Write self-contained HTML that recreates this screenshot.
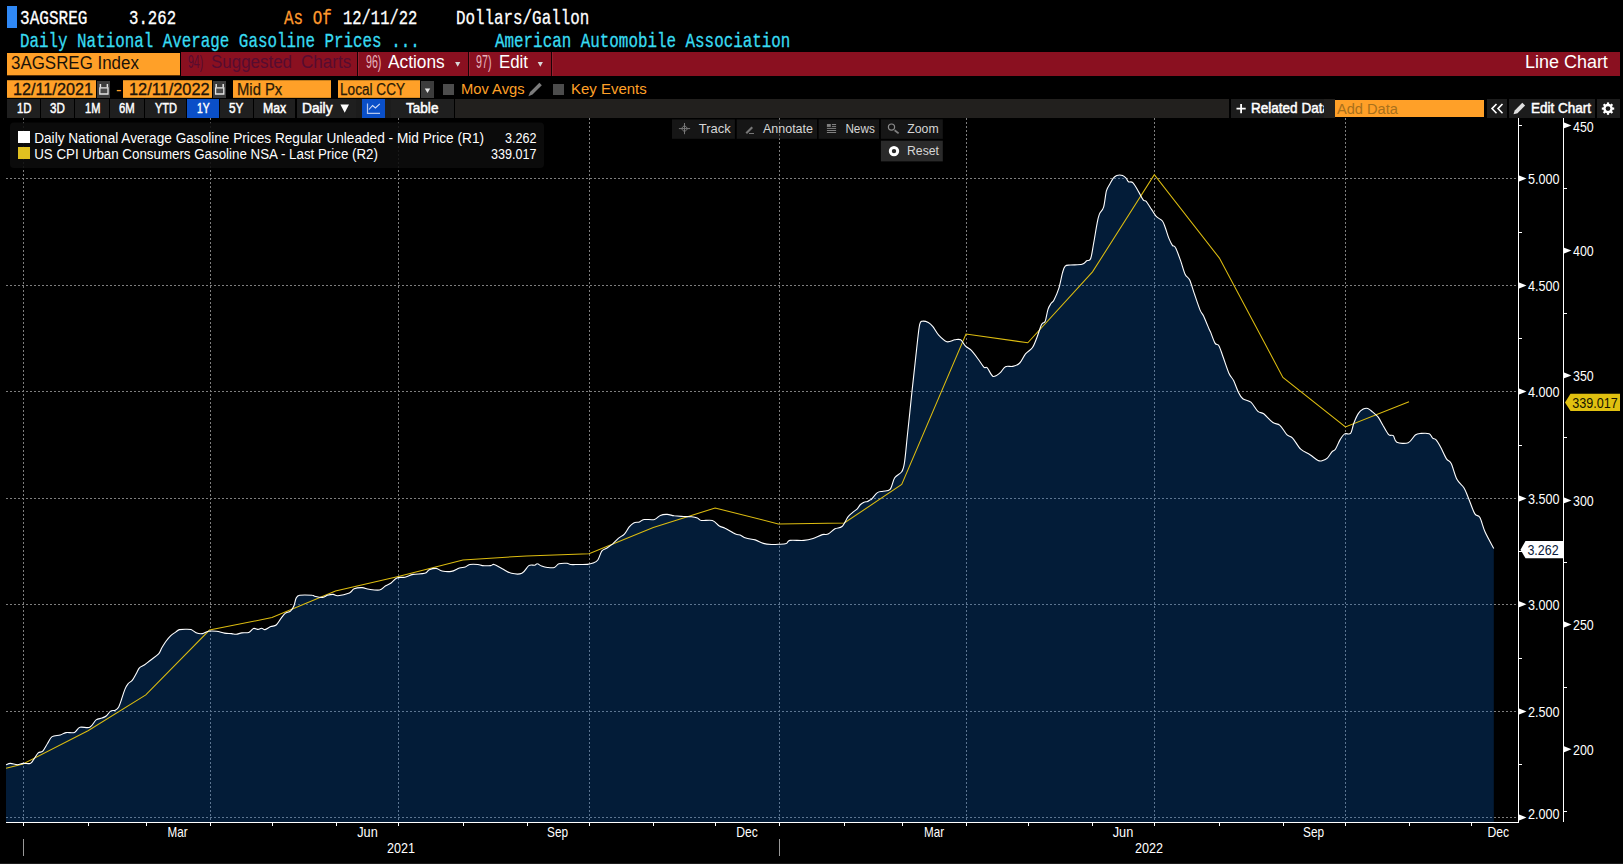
<!DOCTYPE html>
<html lang="en"><head><meta charset="utf-8"><title>3AGSREG Index - Line Chart</title>
<style>
html,body{margin:0;padding:0;background:#000;}
body{width:1623px;height:864px;position:relative;overflow:hidden;font-family:"Liberation Sans",sans-serif;}
.t{position:absolute;white-space:pre;transform-origin:0 0;display:block;}
.b{position:absolute;box-sizing:border-box;}
svg{position:absolute;left:0;top:0;}
</style></head><body>

<div id="hdr">
<div class="b" style="left:7px;top:6px;width:10.00px;height:22.00px;background:#2f88f5;"></div>
<span class="t" style="left:20.30px;top:8.85px;font-size:20.3px;line-height:20.3px;font-family:'Liberation Mono',monospace;color:#fff;transform:scaleX(0.7912);-webkit-text-stroke:0.3px #fff;">3AGSREG</span>
<span class="t" style="left:129.40px;top:8.85px;font-size:20.3px;line-height:20.3px;font-family:'Liberation Mono',monospace;color:#fff;transform:scaleX(0.7729);-webkit-text-stroke:0.3px #fff;">3.262</span>
<span class="t" style="left:283.60px;top:8.85px;font-size:20.3px;line-height:20.3px;font-family:'Liberation Mono',monospace;color:#ff9a2e;transform:scaleX(0.7844);-webkit-text-stroke:0.3px #ff9a2e;">As Of</span>
<span class="t" style="left:343.30px;top:8.85px;font-size:20.3px;line-height:20.3px;font-family:'Liberation Mono',monospace;color:#fff;transform:scaleX(0.7631);-webkit-text-stroke:0.3px #fff;">12/11/22</span>
<span class="t" style="left:456.00px;top:8.85px;font-size:20.3px;line-height:20.3px;font-family:'Liberation Mono',monospace;color:#fff;transform:scaleX(0.7818);-webkit-text-stroke:0.3px #fff;">Dollars/Gallon</span>
<span class="t" style="left:20.30px;top:31.85px;font-size:20.3px;line-height:20.3px;font-family:'Liberation Mono',monospace;color:#38dcf2;transform:scaleX(0.7819);-webkit-text-stroke:0.3px #38dcf2;">Daily National Average Gasoline Prices ...</span>
<span class="t" style="left:495.20px;top:31.85px;font-size:20.3px;line-height:20.3px;font-family:'Liberation Mono',monospace;color:#38dcf2;transform:scaleX(0.7828);-webkit-text-stroke:0.3px #38dcf2;">American Automobile Association</span>
</div>
<div id="bar">
<div class="b" style="left:181px;top:52px;width:1439.00px;height:23.70px;background:#8a1020;"></div>
<div class="b" style="left:7px;top:53px;width:173.30px;height:22.60px;background:#ffa028;border-bottom:1.1px solid #5a3206;"></div>
<span class="t" style="left:10.80px;top:53.70px;font-size:18.9px;line-height:18.9px;font-family:'Liberation Sans',sans-serif;color:#1a1208;transform:scaleX(0.8957);">3AGSREG Index</span>
<span class="t" style="left:188.30px;top:53.36px;font-size:18px;line-height:18px;font-family:'Liberation Sans',sans-serif;color:#560c30;transform:scaleX(0.5846);">94)</span>
<span class="t" style="left:211.00px;top:53.36px;font-size:18px;line-height:18px;font-family:'Liberation Sans',sans-serif;color:#560c30;transform:scaleX(0.9412);">Suggested</span>
<span class="t" style="left:300.70px;top:53.36px;font-size:18px;line-height:18px;font-family:'Liberation Sans',sans-serif;color:#560c30;transform:scaleX(0.9491);">Charts</span>
<div class="b" style="left:357px;top:52px;width:1.00px;height:23.50px;background:#1a0206;"></div>
<div class="b" style="left:358px;top:52px;width:1.00px;height:23.50px;background:#98202e;"></div>
<div class="b" style="left:468px;top:52px;width:1.00px;height:23.50px;background:#1a0206;"></div>
<div class="b" style="left:469px;top:52px;width:1.00px;height:23.50px;background:#98202e;"></div>
<div class="b" style="left:551px;top:52px;width:1.00px;height:23.50px;background:#1a0206;"></div>
<div class="b" style="left:552px;top:52px;width:1.00px;height:23.50px;background:#98202e;"></div>
<span class="t" style="left:365.90px;top:53.19px;font-size:18.2px;line-height:18.2px;font-family:'Liberation Sans',sans-serif;color:#e6b4be;transform:scaleX(0.5853);">96)</span>
<span class="t" style="left:388.30px;top:53.19px;font-size:18.2px;line-height:18.2px;font-family:'Liberation Sans',sans-serif;color:#fff;transform:scaleX(0.9509);">Actions</span>
<span class="t" style="left:476.10px;top:53.19px;font-size:18.2px;line-height:18.2px;font-family:'Liberation Sans',sans-serif;color:#e6b4be;transform:scaleX(0.5891);">97)</span>
<span class="t" style="left:498.90px;top:53.19px;font-size:18.2px;line-height:18.2px;font-family:'Liberation Sans',sans-serif;color:#fff;transform:scaleX(0.9261);">Edit</span>
<span class="t" style="left:1524.60px;top:52.68px;font-size:18.8px;line-height:18.8px;font-family:'Liberation Sans',sans-serif;color:#fff;transform:scaleX(0.9561);">Line Chart</span>
<svg width="1623" height="864" viewBox="0 0 1623 864" style="pointer-events:none"><path d="M455.1 61.9h5.2l-2.6 4.8zM537.7 61.9h5.2l-2.6 4.8z" fill="#d8d8d8"/></svg>
</div>
<div id="row4">
<div class="b" style="left:7px;top:80.2px;width:89.00px;height:17.90px;background:#ffa028;border-top:1px solid #c8801e;border-bottom:1px solid #d88a20;"></div>
<div class="b" style="left:123px;top:80.2px;width:88.60px;height:17.90px;background:#ffa028;border-top:1px solid #c8801e;border-bottom:1px solid #d88a20;"></div>
<div class="b" style="left:232.7px;top:80.2px;width:98.50px;height:17.90px;background:#ffa028;border-top:1px solid #c8801e;border-bottom:1px solid #d88a20;"></div>
<div class="b" style="left:337.7px;top:80.2px;width:82.60px;height:17.90px;background:#ffa028;border-top:1px solid #c8801e;border-bottom:1px solid #d88a20;"></div>
<span class="t" style="left:12.60px;top:81.52px;font-size:15.8px;line-height:15.8px;font-family:'Liberation Sans',sans-serif;color:#20140a;transform:scaleX(1.0265);-webkit-text-stroke:0.3px #20140a;">12/11/2021</span>
<span class="t" style="left:128.50px;top:81.52px;font-size:15.8px;line-height:15.8px;font-family:'Liberation Sans',sans-serif;color:#20140a;transform:scaleX(1.0354);-webkit-text-stroke:0.3px #20140a;">12/11/2022</span>
<span class="t" style="left:236.50px;top:81.52px;font-size:15.8px;line-height:15.8px;font-family:'Liberation Sans',sans-serif;color:#2a1a06;transform:scaleX(0.9376);-webkit-text-stroke:0.25px #2a1a06;">Mid Px</span>
<span class="t" style="left:340.40px;top:81.52px;font-size:15.8px;line-height:15.8px;font-family:'Liberation Sans',sans-serif;color:#2a1a06;transform:scaleX(0.8615);-webkit-text-stroke:0.25px #2a1a06;">Local CCY</span>
<span class="t" style="left:115.50px;top:81.52px;font-size:15.8px;line-height:15.8px;font-family:'Liberation Sans',sans-serif;color:#ffa028;transform:scaleX(1.0476);">-</span>
<div class="b" style="left:97.2px;top:80.8px;width:13.00px;height:17.30px;background:#3c3c3c;"></div>
<div class="b" style="left:213px;top:80.8px;width:12.90px;height:17.30px;background:#3c3c3c;"></div>
<div class="b" style="left:421.4px;top:81px;width:12.30px;height:16.80px;background:#3c3c3c;"></div>
<div class="b" style="left:443.1px;top:84.4px;width:10.90px;height:10.50px;background:#4c4c4c;"></div>
<div class="b" style="left:553.1px;top:84.4px;width:10.90px;height:10.50px;background:#4c4c4c;"></div>
<span class="t" style="left:461.40px;top:81.87px;font-size:14.8px;line-height:14.8px;font-family:'Liberation Sans',sans-serif;color:#ffa028;transform:scaleX(0.9947);">Mov Avgs</span>
<span class="t" style="left:571.40px;top:81.87px;font-size:14.8px;line-height:14.8px;font-family:'Liberation Sans',sans-serif;color:#ffa028;transform:scaleX(1.0115);">Key Events</span>
</div>
<div id="row5">
<div class="b" style="left:455.4px;top:99.4px;width:774.10px;height:18.30px;background:#22201e;"></div>
<div class="b" style="left:7px;top:99.4px;width:32.70px;height:18.30px;background:#1f1f1f;"></div>
<div class="b" style="left:40.7px;top:99.4px;width:33.30px;height:18.30px;background:#1f1f1f;"></div>
<div class="b" style="left:75px;top:99.4px;width:34.40px;height:18.30px;background:#1f1f1f;"></div>
<div class="b" style="left:110.3px;top:99.4px;width:33.70px;height:18.30px;background:#1f1f1f;"></div>
<div class="b" style="left:145px;top:99.4px;width:41.00px;height:18.30px;background:#1f1f1f;"></div>
<div class="b" style="left:187px;top:99.4px;width:32.00px;height:18.30px;background:#0a4fc8;"></div>
<div class="b" style="left:220px;top:99.4px;width:33.00px;height:18.30px;background:#1f1f1f;"></div>
<div class="b" style="left:254px;top:99.4px;width:40.60px;height:18.30px;background:#1f1f1f;"></div>
<div class="b" style="left:296.8px;top:99.4px;width:58.80px;height:18.30px;background:#1f1f1f;"></div>
<div class="b" style="left:355.6px;top:99.4px;width:6.40px;height:18.30px;background:#1c1c1c;"></div>
<div class="b" style="left:362px;top:99.4px;width:23.00px;height:18.30px;background:#0a4fc8;"></div>
<div class="b" style="left:385px;top:99.4px;width:5.70px;height:18.30px;background:#1c1c1c;"></div>
<div class="b" style="left:390.7px;top:99.4px;width:63.80px;height:18.30px;background:#1f1f1f;"></div>
<div class="b" style="left:1230.75px;top:99.4px;width:93.25px;height:18.30px;background:#1c1c1c;"></div>
<div class="b" style="left:1324px;top:99.4px;width:10.80px;height:18.30px;background:#22201e;"></div>
<div class="b" style="left:1334.8px;top:99.8px;width:149.20px;height:17.20px;background:#ffa028;"></div>
<div class="b" style="left:1486.5px;top:99.4px;width:20.50px;height:18.30px;background:#1c1c1c;"></div>
<div class="b" style="left:1509px;top:99.4px;width:86.00px;height:18.30px;background:#1c1c1c;"></div>
<div class="b" style="left:1597px;top:99.4px;width:22.50px;height:18.30px;background:#1c1c1c;"></div>
</div>
<div id="row5t">
<span class="t" style="left:16.60px;top:101.01px;font-size:14.4px;line-height:14.4px;font-family:'Liberation Sans',sans-serif;color:#fff;transform:scaleX(0.7891);-webkit-text-stroke:0.5px #fff;">1D</span>
<span class="t" style="left:50.30px;top:101.01px;font-size:14.4px;line-height:14.4px;font-family:'Liberation Sans',sans-serif;color:#fff;transform:scaleX(0.8054);-webkit-text-stroke:0.5px #fff;">3D</span>
<span class="t" style="left:85.00px;top:101.01px;font-size:14.4px;line-height:14.4px;font-family:'Liberation Sans',sans-serif;color:#fff;transform:scaleX(0.7700);-webkit-text-stroke:0.5px #fff;">1M</span>
<span class="t" style="left:119.20px;top:101.01px;font-size:14.4px;line-height:14.4px;font-family:'Liberation Sans',sans-serif;color:#fff;transform:scaleX(0.7850);-webkit-text-stroke:0.5px #fff;">6M</span>
<span class="t" style="left:154.90px;top:101.01px;font-size:14.4px;line-height:14.4px;font-family:'Liberation Sans',sans-serif;color:#fff;transform:scaleX(0.7652);-webkit-text-stroke:0.5px #fff;">YTD</span>
<span class="t" style="left:197.20px;top:101.01px;font-size:14.4px;line-height:14.4px;font-family:'Liberation Sans',sans-serif;color:#fff;transform:scaleX(0.7174);-webkit-text-stroke:0.5px #fff;">1Y</span>
<span class="t" style="left:229.20px;top:101.01px;font-size:14.4px;line-height:14.4px;font-family:'Liberation Sans',sans-serif;color:#fff;transform:scaleX(0.8199);-webkit-text-stroke:0.5px #fff;">5Y</span>
<span class="t" style="left:262.80px;top:101.01px;font-size:14.4px;line-height:14.4px;font-family:'Liberation Sans',sans-serif;color:#fff;transform:scaleX(0.8533);-webkit-text-stroke:0.5px #fff;">Max</span>
<span class="t" style="left:302.00px;top:101.01px;font-size:14.4px;line-height:14.4px;font-family:'Liberation Sans',sans-serif;color:#fff;transform:scaleX(0.9550);-webkit-text-stroke:0.5px #fff;">Daily</span>
<span class="t" style="left:406.40px;top:101.01px;font-size:14.4px;line-height:14.4px;font-family:'Liberation Sans',sans-serif;color:#fff;transform:scaleX(0.9425);-webkit-text-stroke:0.5px #fff;">Table</span>
<div class="b" style="left:1230.8px;top:99.4px;width:93.4px;height:18.299999999999997px;overflow:hidden">
<span class="t" style="left:20.60px;top:1.81px;font-size:14.4px;line-height:14.4px;font-family:'Liberation Sans',sans-serif;color:#fff;transform:scaleX(0.9402);-webkit-text-stroke:0.5px #fff;">Related Data</span>
</div>
<span class="t" style="left:1336.50px;top:100.95px;font-size:15.3px;line-height:15.3px;font-family:'Liberation Sans',sans-serif;color:#a8701c;transform:scaleX(0.9550);">Add Data</span>
<span class="t" style="left:1530.75px;top:101.21px;font-size:14.4px;line-height:14.4px;font-family:'Liberation Sans',sans-serif;color:#fff;transform:scaleX(0.9384);-webkit-text-stroke:0.5px #fff;">Edit Chart</span>
</div>
<svg width="1623" height="864" viewBox="0 0 1623 864">
<g id="icons">
<path d="M340.4 104.5h8.6l-4.3 8.2z" fill="#fff"/>
<path d="M424.8 88.6h5.4l-2.7 4.4z" fill="#e8e8e8"/>
<g transform="translate(97.2,80.2)" fill="none" stroke="#e4e4e4"><path d="M2.6 7.6h8.2v6.2h-8.2z" stroke-width="1.3" fill="#4a4a4a"/><path d="M3.2 3.9v3.4M10.2 3.9v3.4" stroke-width="1.5"/></g>
<g transform="translate(213,80.2)" fill="none" stroke="#e4e4e4"><path d="M2.6 7.6h8.2v6.2h-8.2z" stroke-width="1.3" fill="#4a4a4a"/><path d="M3.2 3.9v3.4M10.2 3.9v3.4" stroke-width="1.5"/></g>
<path d="M528.4 96.2L530.1 92.1 539.4 82.8 541.8 85.2 532.5 94.5Z" fill="#7c7c7c"/>
<path d="M367.5 103.5v9.8h12.5" fill="none" stroke="#b4c6ee" stroke-width="1.2"/><path d="M369 109.5l3.6-4 2.8 2.4 4.4-4" fill="none" stroke="#d6e0f8" stroke-width="1.1"/>
<path d="M1236.5 108.6h9.2M1241.1 104v9.2" stroke="#fff" stroke-width="1.8"/>
<path d="M1496.5 104l-4.5 4.6 4.5 4.6M1502.5 104l-4.5 4.6 4.5 4.6" fill="none" stroke="#fff" stroke-width="1.6"/>
<path d="M1513.5 114.2l1.2-3.8 7.6-7.6 2.8 2.8-7.6 7.6z" fill="#e0e0e0"/>
<g transform="translate(1608,108.6)"><circle r="3.6" fill="none" stroke="#fff" stroke-width="2.4"/><rect x="-1.1" y="-6.2" width="2.2" height="3" fill="#fff" transform="rotate(0)"/><rect x="-1.1" y="-6.2" width="2.2" height="3" fill="#fff" transform="rotate(45)"/><rect x="-1.1" y="-6.2" width="2.2" height="3" fill="#fff" transform="rotate(90)"/><rect x="-1.1" y="-6.2" width="2.2" height="3" fill="#fff" transform="rotate(135)"/><rect x="-1.1" y="-6.2" width="2.2" height="3" fill="#fff" transform="rotate(180)"/><rect x="-1.1" y="-6.2" width="2.2" height="3" fill="#fff" transform="rotate(225)"/><rect x="-1.1" y="-6.2" width="2.2" height="3" fill="#fff" transform="rotate(270)"/><rect x="-1.1" y="-6.2" width="2.2" height="3" fill="#fff" transform="rotate(315)"/></g>
</g>
<g stroke="#7e7e7e" stroke-width="1" stroke-dasharray="2 2" shape-rendering="crispEdges">
<path d="M6 178.5H1516"/>
<path d="M6 285.5H1516"/>
<path d="M6 391.5H1516"/>
<path d="M6 498.5H1516"/>
<path d="M6 604.5H1516"/>
<path d="M6 711.5H1516"/>
<path d="M6 817.5H1516"/>
<path d="M23.5 118V822"/>
<path d="M210.5 118V822"/>
<path d="M398.5 118V822"/>
<path d="M589.5 118V822"/>
<path d="M779.5 118V822"/>
<path d="M966.5 118V822"/>
<path d="M1154.5 118V822"/>
<path d="M1345.5 118V822"/>
</g>
<rect x="672" y="119.4" width="62.9" height="19.4" fill="#2c2c2c" fill-opacity="0.5"/>
<rect x="736.7" y="119.4" width="80.4" height="19.4" fill="#2c2c2c" fill-opacity="0.5"/>
<rect x="818.6" y="119.4" width="60.4" height="19.4" fill="#2c2c2c" fill-opacity="0.5"/>
<rect x="880.9" y="119.4" width="61.9" height="19.4" fill="#2c2c2c" fill-opacity="0.5"/>
<rect x="880.9" y="140.7" width="61.9" height="20.7" fill="#2a2a2a"/>
<path d="M6.0,822 L6.0,764.8 C6.7,764.6 8.5,763.4 10.4,763.4 C12.3,763.4 15.3,764.8 17.4,764.8 C19.5,764.8 21.0,763.6 23.1,763.4 C25.2,763.2 28.4,764.0 30.1,763.4 C31.9,762.8 32.2,761.5 33.6,759.7 C35.0,757.9 36.7,754.2 38.2,752.8 C39.7,751.4 41.2,752.8 42.8,751.2 C44.3,749.7 46.0,745.9 47.5,743.5 C49.0,741.1 50.0,738.0 52.1,736.6 C54.2,735.2 57.9,735.7 60.2,735.0 C62.5,734.3 63.6,733.0 66.0,732.6 C68.4,732.2 72.2,733.3 74.5,732.4 C76.8,731.5 77.4,728.1 79.9,727.3 C82.5,726.4 87.1,728.5 89.8,727.3 C92.5,726.1 94.1,721.4 96.1,719.9 C98.1,718.4 100.2,718.8 101.9,718.1 C103.6,717.4 105.0,716.9 106.5,715.7 C108.0,714.5 109.1,712.0 110.6,711.1 C112.1,710.2 113.9,710.9 115.3,710.2 C116.7,709.5 117.7,708.7 118.7,706.9 C119.7,705.1 120.5,702.5 121.5,699.5 C122.5,696.5 123.9,691.7 125.0,689.1 C126.1,686.5 126.8,685.3 128.0,683.8 C129.2,682.3 131.0,681.9 132.4,680.1 C133.8,678.3 135.4,675.0 136.6,672.9 C137.8,670.8 138.2,669.0 139.6,667.6 C140.9,666.2 142.9,666.0 144.7,664.8 C146.5,663.6 148.2,662.0 150.5,660.2 C152.8,658.4 156.7,656.0 158.6,653.9 C160.5,651.8 160.7,649.6 162.0,647.5 C163.3,645.4 164.7,643.0 166.2,641.0 C167.7,639.0 169.2,637.1 170.8,635.6 C172.4,634.1 174.5,632.9 175.9,631.9 C177.3,630.9 177.9,630.0 179.4,629.6 C180.9,629.2 183.3,629.2 185.2,629.2 C187.1,629.2 189.1,629.0 191.0,629.6 C192.9,630.2 194.9,632.4 196.8,633.1 C198.7,633.8 200.6,633.9 202.5,633.6 C204.4,633.3 206.0,631.6 208.3,631.2 C210.6,630.8 213.7,630.9 216.4,631.2 C219.1,631.5 222.0,632.7 224.5,633.1 C227.0,633.5 229.6,633.4 231.5,633.6 C233.4,633.8 234.4,634.4 236.1,634.3 C237.8,634.2 239.8,633.2 241.9,632.9 C244.0,632.6 246.9,633.1 248.8,632.4 C250.7,631.7 251.9,629.0 253.5,628.5 C255.1,628.0 256.8,629.4 258.1,629.4 C259.5,629.4 260.5,628.2 261.6,628.2 C262.8,628.2 263.5,629.9 265.0,629.6 C266.5,629.3 268.9,627.4 270.8,626.6 C272.7,625.8 274.5,626.4 276.2,625.0 C277.9,623.6 279.7,620.0 281.2,618.1 C282.7,616.2 283.6,614.6 285.2,613.4 C286.8,612.2 289.0,612.4 290.5,611.1 C292.0,609.8 293.1,608.0 294.0,605.8 C294.9,603.6 295.2,599.9 296.2,598.1 C297.1,596.4 297.0,595.8 299.7,595.3 C302.4,594.8 309.9,595.1 312.4,595.3 C314.7,595.4 313.0,595.9 314.7,596.2 C316.4,596.6 320.7,597.5 322.8,597.4 C324.9,597.2 325.8,595.8 327.5,595.3 C329.2,594.8 331.5,594.3 333.2,594.4 C334.9,594.5 335.2,595.9 337.9,595.7 C340.6,595.5 346.7,594.1 349.4,593.0 C352.1,591.9 352.0,589.7 354.1,588.8 C356.2,587.9 359.7,587.5 362.2,587.6 C364.7,587.7 366.2,588.9 369.1,589.3 C372.0,589.7 376.8,590.5 379.5,590.0 C382.2,589.5 383.4,587.2 385.3,586.0 C387.2,584.8 389.2,584.4 391.1,583.0 C393.0,581.6 394.6,578.9 396.9,577.9 C399.2,576.9 402.3,577.8 405.0,577.2 C407.7,576.6 409.8,575.0 413.1,574.4 C416.4,573.8 422.0,574.1 424.7,573.3 C427.4,572.5 427.4,570.6 429.3,569.8 C431.2,569.0 434.1,568.2 436.2,568.4 C438.3,568.6 439.5,570.5 442.0,571.0 C444.5,571.5 448.4,571.9 451.3,571.4 C454.2,570.9 457.1,568.7 459.4,568.0 C461.7,567.3 463.5,567.6 465.2,567.0 C466.9,566.4 467.7,564.9 469.8,564.5 C471.9,564.1 475.8,564.3 477.9,564.5 C480.0,564.7 480.4,565.4 482.5,565.6 C484.6,565.8 488.7,565.8 490.6,565.6 C492.5,565.4 492.2,564.0 494.1,564.5 C496.0,565.0 499.3,567.2 502.2,568.7 C505.1,570.2 508.2,572.5 511.5,573.3 C514.8,574.1 519.0,574.6 521.9,573.3 C524.8,572.0 526.7,567.0 528.8,565.6 C530.9,564.2 533.2,565.5 534.6,565.2 C536.0,564.9 536.2,563.6 537.4,563.8 C538.6,563.9 539.9,565.5 541.6,566.1 C543.3,566.7 545.3,567.3 547.4,567.5 C549.5,567.7 552.4,568.1 554.3,567.5 C556.2,566.9 556.8,564.5 558.9,563.8 C561.0,563.1 565.1,563.2 567.0,563.3 C568.9,563.4 568.6,564.3 570.5,564.5 C572.4,564.7 575.8,564.5 578.6,564.5 C581.4,564.5 585.0,564.6 587.4,564.4 C589.8,564.2 591.4,563.8 593.1,563.1 C594.8,562.4 596.3,562.0 597.8,560.0 C599.3,558.0 600.4,552.8 601.9,550.8 C603.4,548.8 605.2,549.2 607.0,548.0 C608.8,546.8 610.9,545.4 612.8,543.8 C614.7,542.1 616.7,539.7 618.6,538.1 C620.5,536.5 622.7,535.9 624.4,534.1 C626.1,532.3 627.5,529.1 629.0,527.2 C630.5,525.4 632.0,523.9 633.7,523.0 C635.4,522.1 637.7,522.5 639.4,521.9 C641.1,521.3 641.6,519.9 644.1,519.5 C646.6,519.1 651.8,520.2 654.5,519.5 C657.2,518.8 658.2,516.2 660.3,515.4 C662.4,514.5 664.9,514.3 667.2,514.4 C669.5,514.5 671.5,515.4 674.2,515.8 C676.9,516.1 680.5,516.3 683.4,516.5 C686.3,516.7 689.2,516.6 691.5,516.8 C693.8,517.0 695.6,517.3 697.3,517.9 C699.0,518.5 699.0,520.1 701.5,520.5 C704.0,520.9 709.4,519.6 712.4,520.5 C715.4,521.4 717.2,524.7 719.3,526.0 C721.4,527.3 722.4,526.9 725.1,528.3 C727.8,529.6 733.0,533.0 735.5,534.1 C738.0,535.2 738.4,534.3 740.1,535.0 C741.8,535.7 743.4,537.3 745.9,538.1 C748.4,538.9 752.3,539.0 755.2,539.9 C758.1,540.8 760.6,542.6 763.3,543.4 C766.0,544.2 768.9,544.4 771.4,544.5 C773.9,544.6 775.8,544.5 778.3,544.3 C780.8,544.1 784.5,544.0 786.4,543.4 C788.3,542.8 787.0,540.9 789.9,540.4 C792.8,539.9 799.9,540.7 803.8,540.4 C807.7,540.1 810.0,539.5 813.1,538.5 C816.2,537.5 819.8,535.3 822.3,534.6 C824.8,533.9 826.0,535.1 828.1,534.1 C830.2,533.1 832.7,530.1 835.0,528.8 C837.3,527.5 839.9,528.4 842.0,526.5 C844.1,524.6 846.1,519.5 847.8,517.2 C849.5,514.9 850.9,514.0 852.4,512.6 C853.9,511.2 855.6,510.5 857.0,509.1 C858.4,507.8 859.3,505.6 860.5,504.5 C861.7,503.4 862.8,502.7 864.0,502.2 C865.2,501.7 866.5,501.9 867.5,501.5 C868.5,501.1 869.3,500.3 870.0,499.9 C870.7,499.5 870.4,500.3 871.6,499.1 C872.8,497.9 875.5,493.9 877.4,492.6 C879.3,491.3 881.0,491.7 883.1,491.2 C885.2,490.7 888.2,491.6 890.1,489.4 C892.0,487.2 892.8,480.7 894.7,477.8 C896.6,474.9 900.1,474.2 901.7,471.8 C903.3,469.4 903.4,469.4 904.4,463.2 C905.4,456.9 906.4,444.5 907.5,434.3 C908.6,424.1 909.8,412.7 910.9,401.9 C912.0,391.1 913.3,379.4 914.4,369.4 C915.5,359.4 916.5,349.2 917.4,341.7 C918.3,334.2 918.9,327.7 919.7,324.3 C920.5,320.9 920.6,321.6 922.0,321.3 C923.4,321.0 926.5,321.6 928.3,322.5 C930.1,323.4 931.2,324.5 932.9,326.6 C934.6,328.7 936.4,332.7 938.7,335.2 C941.0,337.7 944.1,340.9 946.8,341.7 C949.5,342.5 952.6,340.1 954.9,339.8 C957.2,339.5 959.0,338.8 960.7,339.8 C962.4,340.8 963.6,344.1 965.3,345.8 C967.0,347.5 969.0,348.0 971.1,350.2 C973.2,352.4 976.0,356.2 978.1,359.0 C980.2,361.8 982.3,365.6 983.8,367.1 C985.3,368.6 985.8,366.2 987.3,367.8 C988.8,369.4 991.0,375.5 993.1,376.4 C995.2,377.2 998.0,374.5 1000.0,372.9 C1002.0,371.3 1003.3,367.8 1005.4,366.7 C1007.5,365.6 1010.4,367.0 1012.8,366.4 C1015.2,365.8 1017.6,365.1 1019.7,363.0 C1021.8,360.9 1023.4,356.5 1025.5,353.9 C1027.6,351.3 1030.6,350.3 1032.5,347.5 C1034.4,344.7 1035.6,340.9 1037.1,337.0 C1038.6,333.1 1040.3,326.9 1041.7,324.3 C1043.1,321.7 1044.2,323.8 1045.2,321.3 C1046.2,318.8 1047.0,312.3 1048.0,309.3 C1049.0,306.3 1050.0,305.1 1051.0,303.5 C1052.0,301.9 1052.7,302.6 1054.0,300.0 C1055.3,297.4 1057.5,292.6 1058.9,288.1 C1060.3,283.6 1061.4,276.8 1062.4,273.1 C1063.5,269.5 1063.9,267.6 1065.2,266.2 C1066.5,264.8 1067.7,265.3 1070.5,265.0 C1073.3,264.7 1079.4,265.0 1082.1,264.3 C1084.8,263.6 1085.3,261.7 1086.7,260.8 C1088.1,259.9 1089.4,261.8 1090.6,258.8 C1091.8,255.8 1092.6,248.9 1093.7,243.0 C1094.8,237.1 1096.1,228.1 1097.1,223.3 C1098.0,218.5 1098.3,216.8 1099.4,214.1 C1100.5,211.4 1102.4,211.0 1103.6,207.1 C1104.8,203.2 1105.4,194.8 1106.4,190.9 C1107.5,187.1 1108.8,186.1 1109.9,184.0 C1111.1,181.9 1112.2,179.6 1113.3,178.2 C1114.4,176.8 1115.2,175.9 1116.8,175.4 C1118.3,174.9 1121.0,174.9 1122.6,175.4 C1124.1,175.9 1125.1,177.1 1126.1,178.2 C1127.1,179.2 1127.2,180.9 1128.4,181.7 C1129.6,182.5 1131.3,181.1 1133.0,182.8 C1134.7,184.5 1137.1,189.2 1138.8,192.1 C1140.5,195.0 1142.2,198.7 1143.4,200.2 C1144.6,201.7 1144.9,199.8 1146.2,201.3 C1147.5,202.8 1149.8,206.9 1151.5,209.4 C1153.2,211.9 1154.4,214.5 1156.2,216.4 C1158.0,218.3 1160.9,219.1 1162.4,221.0 C1163.9,222.9 1164.3,225.1 1165.4,228.0 C1166.5,230.9 1167.7,235.5 1168.9,238.4 C1170.1,241.3 1171.3,243.8 1172.4,245.3 C1173.5,246.8 1174.1,245.1 1175.4,247.6 C1176.8,250.1 1178.9,255.9 1180.5,260.4 C1182.1,264.8 1183.6,271.0 1185.1,274.3 C1186.6,277.6 1188.2,276.7 1189.7,280.0 C1191.2,283.3 1192.7,288.9 1194.4,293.9 C1196.1,298.9 1198.6,306.4 1200.1,310.1 C1201.6,313.8 1202.0,312.6 1203.6,315.9 C1205.1,319.2 1208.3,327.2 1209.4,329.8 C1210.4,332.4 1209.5,329.4 1210.4,331.6 C1211.3,333.8 1213.6,340.7 1215.0,343.1 C1216.4,345.5 1217.7,343.6 1219.0,345.9 C1220.3,348.2 1221.4,352.4 1223.1,357.0 C1224.8,361.6 1227.2,369.3 1228.9,373.2 C1230.7,377.1 1232.0,377.5 1233.6,380.6 C1235.1,383.7 1236.7,388.8 1238.2,391.8 C1239.7,394.8 1240.7,397.0 1242.8,398.7 C1244.9,400.4 1248.4,400.1 1250.9,402.2 C1253.4,404.3 1255.8,409.5 1257.9,411.4 C1260.0,413.3 1261.2,411.9 1263.7,413.8 C1266.2,415.7 1270.2,420.6 1272.9,422.5 C1275.6,424.4 1277.6,423.3 1279.9,425.3 C1282.2,427.3 1284.7,432.5 1286.8,434.6 C1288.9,436.7 1290.3,435.7 1292.6,438.1 C1294.9,440.5 1297.8,446.4 1300.7,449.2 C1303.6,452.0 1307.1,452.8 1310.0,454.7 C1312.9,456.6 1316.0,459.5 1318.1,460.5 C1320.2,461.5 1321.2,460.9 1322.7,460.5 C1324.2,460.1 1325.8,459.6 1327.3,458.2 C1328.8,456.8 1330.6,453.4 1331.9,451.9 C1333.2,450.4 1334.1,451.2 1335.4,449.2 C1336.8,447.2 1338.5,442.4 1340.0,439.9 C1341.5,437.3 1343.0,435.0 1344.7,433.9 C1346.5,432.8 1349.0,435.2 1350.5,433.4 C1352.0,431.6 1352.6,426.4 1353.9,423.0 C1355.2,419.6 1357.0,415.4 1358.6,413.1 C1360.1,410.8 1361.7,409.9 1363.2,409.1 C1364.7,408.3 1366.2,407.9 1367.8,408.4 C1369.3,408.9 1370.8,410.4 1372.5,411.9 C1374.2,413.4 1376.5,415.0 1378.2,417.2 C1379.9,419.4 1381.2,422.4 1382.9,425.3 C1384.7,428.2 1387.0,432.9 1388.7,434.6 C1390.4,436.3 1392.0,434.4 1393.3,435.7 C1394.6,437.0 1394.3,441.0 1396.8,442.2 C1399.3,443.4 1405.2,443.9 1408.3,442.7 C1411.4,441.5 1413.2,436.6 1415.3,435.0 C1417.4,433.4 1418.8,433.6 1421.1,433.4 C1423.4,433.2 1427.3,432.9 1429.2,433.7 C1431.1,434.5 1431.4,437.1 1432.6,438.1 C1433.8,439.1 1434.8,438.4 1436.1,439.9 C1437.4,441.4 1439.0,444.1 1440.7,447.3 C1442.4,450.5 1444.8,456.2 1446.5,458.9 C1448.2,461.6 1449.5,460.1 1451.2,463.5 C1452.9,466.9 1454.8,475.2 1456.9,479.3 C1459.0,483.4 1462.0,484.7 1463.9,487.8 C1465.8,490.9 1466.7,493.9 1468.5,498.2 C1470.3,502.5 1472.8,510.4 1474.7,513.6 C1476.6,516.8 1478.2,514.5 1479.9,517.6 C1481.6,520.7 1482.8,527.0 1485.1,532.1 C1487.4,537.2 1492.3,545.8 1493.8,548.5 L1493.8,822Z" fill="rgb(10,97,193)" fill-opacity="0.29"/>
<rect x="10" y="122.5" width="534" height="45.5" rx="4" fill="#0c0c0c" fill-opacity="0.88"/>
<polyline fill="none" stroke="#dcbc10" stroke-width="1.05" points="6.0,768.3 23.1,763.9 88.0,730.8 145.8,694.9 209.5,630.1 272.0,617.6 335.5,591.0 398.3,576.4 462.9,559.9 526.5,555.9 589.0,553.8 653.3,527.6 715.1,508.0 778.3,523.9 844.3,523.0 901.7,484.5 966.0,334.0 1027.8,342.8 1092.5,271.9 1154.3,174.7 1219.4,258.1 1282.9,377.4 1345.4,426.9 1409.0,401.7"/>
<path fill="none" stroke="#fff" stroke-width="1.1" stroke-linejoin="round" d="M6.0,764.8 C6.7,764.6 8.5,763.4 10.4,763.4 C12.3,763.4 15.3,764.8 17.4,764.8 C19.5,764.8 21.0,763.6 23.1,763.4 C25.2,763.2 28.4,764.0 30.1,763.4 C31.9,762.8 32.2,761.5 33.6,759.7 C35.0,757.9 36.7,754.2 38.2,752.8 C39.7,751.4 41.2,752.8 42.8,751.2 C44.3,749.7 46.0,745.9 47.5,743.5 C49.0,741.1 50.0,738.0 52.1,736.6 C54.2,735.2 57.9,735.7 60.2,735.0 C62.5,734.3 63.6,733.0 66.0,732.6 C68.4,732.2 72.2,733.3 74.5,732.4 C76.8,731.5 77.4,728.1 79.9,727.3 C82.5,726.4 87.1,728.5 89.8,727.3 C92.5,726.1 94.1,721.4 96.1,719.9 C98.1,718.4 100.2,718.8 101.9,718.1 C103.6,717.4 105.0,716.9 106.5,715.7 C108.0,714.5 109.1,712.0 110.6,711.1 C112.1,710.2 113.9,710.9 115.3,710.2 C116.7,709.5 117.7,708.7 118.7,706.9 C119.7,705.1 120.5,702.5 121.5,699.5 C122.5,696.5 123.9,691.7 125.0,689.1 C126.1,686.5 126.8,685.3 128.0,683.8 C129.2,682.3 131.0,681.9 132.4,680.1 C133.8,678.3 135.4,675.0 136.6,672.9 C137.8,670.8 138.2,669.0 139.6,667.6 C140.9,666.2 142.9,666.0 144.7,664.8 C146.5,663.6 148.2,662.0 150.5,660.2 C152.8,658.4 156.7,656.0 158.6,653.9 C160.5,651.8 160.7,649.6 162.0,647.5 C163.3,645.4 164.7,643.0 166.2,641.0 C167.7,639.0 169.2,637.1 170.8,635.6 C172.4,634.1 174.5,632.9 175.9,631.9 C177.3,630.9 177.9,630.0 179.4,629.6 C180.9,629.2 183.3,629.2 185.2,629.2 C187.1,629.2 189.1,629.0 191.0,629.6 C192.9,630.2 194.9,632.4 196.8,633.1 C198.7,633.8 200.6,633.9 202.5,633.6 C204.4,633.3 206.0,631.6 208.3,631.2 C210.6,630.8 213.7,630.9 216.4,631.2 C219.1,631.5 222.0,632.7 224.5,633.1 C227.0,633.5 229.6,633.4 231.5,633.6 C233.4,633.8 234.4,634.4 236.1,634.3 C237.8,634.2 239.8,633.2 241.9,632.9 C244.0,632.6 246.9,633.1 248.8,632.4 C250.7,631.7 251.9,629.0 253.5,628.5 C255.1,628.0 256.8,629.4 258.1,629.4 C259.5,629.4 260.5,628.2 261.6,628.2 C262.8,628.2 263.5,629.9 265.0,629.6 C266.5,629.3 268.9,627.4 270.8,626.6 C272.7,625.8 274.5,626.4 276.2,625.0 C277.9,623.6 279.7,620.0 281.2,618.1 C282.7,616.2 283.6,614.6 285.2,613.4 C286.8,612.2 289.0,612.4 290.5,611.1 C292.0,609.8 293.1,608.0 294.0,605.8 C294.9,603.6 295.2,599.9 296.2,598.1 C297.1,596.4 297.0,595.8 299.7,595.3 C302.4,594.8 309.9,595.1 312.4,595.3 C314.7,595.4 313.0,595.9 314.7,596.2 C316.4,596.6 320.7,597.5 322.8,597.4 C324.9,597.2 325.8,595.8 327.5,595.3 C329.2,594.8 331.5,594.3 333.2,594.4 C334.9,594.5 335.2,595.9 337.9,595.7 C340.6,595.5 346.7,594.1 349.4,593.0 C352.1,591.9 352.0,589.7 354.1,588.8 C356.2,587.9 359.7,587.5 362.2,587.6 C364.7,587.7 366.2,588.9 369.1,589.3 C372.0,589.7 376.8,590.5 379.5,590.0 C382.2,589.5 383.4,587.2 385.3,586.0 C387.2,584.8 389.2,584.4 391.1,583.0 C393.0,581.6 394.6,578.9 396.9,577.9 C399.2,576.9 402.3,577.8 405.0,577.2 C407.7,576.6 409.8,575.0 413.1,574.4 C416.4,573.8 422.0,574.1 424.7,573.3 C427.4,572.5 427.4,570.6 429.3,569.8 C431.2,569.0 434.1,568.2 436.2,568.4 C438.3,568.6 439.5,570.5 442.0,571.0 C444.5,571.5 448.4,571.9 451.3,571.4 C454.2,570.9 457.1,568.7 459.4,568.0 C461.7,567.3 463.5,567.6 465.2,567.0 C466.9,566.4 467.7,564.9 469.8,564.5 C471.9,564.1 475.8,564.3 477.9,564.5 C480.0,564.7 480.4,565.4 482.5,565.6 C484.6,565.8 488.7,565.8 490.6,565.6 C492.5,565.4 492.2,564.0 494.1,564.5 C496.0,565.0 499.3,567.2 502.2,568.7 C505.1,570.2 508.2,572.5 511.5,573.3 C514.8,574.1 519.0,574.6 521.9,573.3 C524.8,572.0 526.7,567.0 528.8,565.6 C530.9,564.2 533.2,565.5 534.6,565.2 C536.0,564.9 536.2,563.6 537.4,563.8 C538.6,563.9 539.9,565.5 541.6,566.1 C543.3,566.7 545.3,567.3 547.4,567.5 C549.5,567.7 552.4,568.1 554.3,567.5 C556.2,566.9 556.8,564.5 558.9,563.8 C561.0,563.1 565.1,563.2 567.0,563.3 C568.9,563.4 568.6,564.3 570.5,564.5 C572.4,564.7 575.8,564.5 578.6,564.5 C581.4,564.5 585.0,564.6 587.4,564.4 C589.8,564.2 591.4,563.8 593.1,563.1 C594.8,562.4 596.3,562.0 597.8,560.0 C599.3,558.0 600.4,552.8 601.9,550.8 C603.4,548.8 605.2,549.2 607.0,548.0 C608.8,546.8 610.9,545.4 612.8,543.8 C614.7,542.1 616.7,539.7 618.6,538.1 C620.5,536.5 622.7,535.9 624.4,534.1 C626.1,532.3 627.5,529.1 629.0,527.2 C630.5,525.4 632.0,523.9 633.7,523.0 C635.4,522.1 637.7,522.5 639.4,521.9 C641.1,521.3 641.6,519.9 644.1,519.5 C646.6,519.1 651.8,520.2 654.5,519.5 C657.2,518.8 658.2,516.2 660.3,515.4 C662.4,514.5 664.9,514.3 667.2,514.4 C669.5,514.5 671.5,515.4 674.2,515.8 C676.9,516.1 680.5,516.3 683.4,516.5 C686.3,516.7 689.2,516.6 691.5,516.8 C693.8,517.0 695.6,517.3 697.3,517.9 C699.0,518.5 699.0,520.1 701.5,520.5 C704.0,520.9 709.4,519.6 712.4,520.5 C715.4,521.4 717.2,524.7 719.3,526.0 C721.4,527.3 722.4,526.9 725.1,528.3 C727.8,529.6 733.0,533.0 735.5,534.1 C738.0,535.2 738.4,534.3 740.1,535.0 C741.8,535.7 743.4,537.3 745.9,538.1 C748.4,538.9 752.3,539.0 755.2,539.9 C758.1,540.8 760.6,542.6 763.3,543.4 C766.0,544.2 768.9,544.4 771.4,544.5 C773.9,544.6 775.8,544.5 778.3,544.3 C780.8,544.1 784.5,544.0 786.4,543.4 C788.3,542.8 787.0,540.9 789.9,540.4 C792.8,539.9 799.9,540.7 803.8,540.4 C807.7,540.1 810.0,539.5 813.1,538.5 C816.2,537.5 819.8,535.3 822.3,534.6 C824.8,533.9 826.0,535.1 828.1,534.1 C830.2,533.1 832.7,530.1 835.0,528.8 C837.3,527.5 839.9,528.4 842.0,526.5 C844.1,524.6 846.1,519.5 847.8,517.2 C849.5,514.9 850.9,514.0 852.4,512.6 C853.9,511.2 855.6,510.5 857.0,509.1 C858.4,507.8 859.3,505.6 860.5,504.5 C861.7,503.4 862.8,502.7 864.0,502.2 C865.2,501.7 866.5,501.9 867.5,501.5 C868.5,501.1 869.3,500.3 870.0,499.9 C870.7,499.5 870.4,500.3 871.6,499.1 C872.8,497.9 875.5,493.9 877.4,492.6 C879.3,491.3 881.0,491.7 883.1,491.2 C885.2,490.7 888.2,491.6 890.1,489.4 C892.0,487.2 892.8,480.7 894.7,477.8 C896.6,474.9 900.1,474.2 901.7,471.8 C903.3,469.4 903.4,469.4 904.4,463.2 C905.4,456.9 906.4,444.5 907.5,434.3 C908.6,424.1 909.8,412.7 910.9,401.9 C912.0,391.1 913.3,379.4 914.4,369.4 C915.5,359.4 916.5,349.2 917.4,341.7 C918.3,334.2 918.9,327.7 919.7,324.3 C920.5,320.9 920.6,321.6 922.0,321.3 C923.4,321.0 926.5,321.6 928.3,322.5 C930.1,323.4 931.2,324.5 932.9,326.6 C934.6,328.7 936.4,332.7 938.7,335.2 C941.0,337.7 944.1,340.9 946.8,341.7 C949.5,342.5 952.6,340.1 954.9,339.8 C957.2,339.5 959.0,338.8 960.7,339.8 C962.4,340.8 963.6,344.1 965.3,345.8 C967.0,347.5 969.0,348.0 971.1,350.2 C973.2,352.4 976.0,356.2 978.1,359.0 C980.2,361.8 982.3,365.6 983.8,367.1 C985.3,368.6 985.8,366.2 987.3,367.8 C988.8,369.4 991.0,375.5 993.1,376.4 C995.2,377.2 998.0,374.5 1000.0,372.9 C1002.0,371.3 1003.3,367.8 1005.4,366.7 C1007.5,365.6 1010.4,367.0 1012.8,366.4 C1015.2,365.8 1017.6,365.1 1019.7,363.0 C1021.8,360.9 1023.4,356.5 1025.5,353.9 C1027.6,351.3 1030.6,350.3 1032.5,347.5 C1034.4,344.7 1035.6,340.9 1037.1,337.0 C1038.6,333.1 1040.3,326.9 1041.7,324.3 C1043.1,321.7 1044.2,323.8 1045.2,321.3 C1046.2,318.8 1047.0,312.3 1048.0,309.3 C1049.0,306.3 1050.0,305.1 1051.0,303.5 C1052.0,301.9 1052.7,302.6 1054.0,300.0 C1055.3,297.4 1057.5,292.6 1058.9,288.1 C1060.3,283.6 1061.4,276.8 1062.4,273.1 C1063.5,269.5 1063.9,267.6 1065.2,266.2 C1066.5,264.8 1067.7,265.3 1070.5,265.0 C1073.3,264.7 1079.4,265.0 1082.1,264.3 C1084.8,263.6 1085.3,261.7 1086.7,260.8 C1088.1,259.9 1089.4,261.8 1090.6,258.8 C1091.8,255.8 1092.6,248.9 1093.7,243.0 C1094.8,237.1 1096.1,228.1 1097.1,223.3 C1098.0,218.5 1098.3,216.8 1099.4,214.1 C1100.5,211.4 1102.4,211.0 1103.6,207.1 C1104.8,203.2 1105.4,194.8 1106.4,190.9 C1107.5,187.1 1108.8,186.1 1109.9,184.0 C1111.1,181.9 1112.2,179.6 1113.3,178.2 C1114.4,176.8 1115.2,175.9 1116.8,175.4 C1118.3,174.9 1121.0,174.9 1122.6,175.4 C1124.1,175.9 1125.1,177.1 1126.1,178.2 C1127.1,179.2 1127.2,180.9 1128.4,181.7 C1129.6,182.5 1131.3,181.1 1133.0,182.8 C1134.7,184.5 1137.1,189.2 1138.8,192.1 C1140.5,195.0 1142.2,198.7 1143.4,200.2 C1144.6,201.7 1144.9,199.8 1146.2,201.3 C1147.5,202.8 1149.8,206.9 1151.5,209.4 C1153.2,211.9 1154.4,214.5 1156.2,216.4 C1158.0,218.3 1160.9,219.1 1162.4,221.0 C1163.9,222.9 1164.3,225.1 1165.4,228.0 C1166.5,230.9 1167.7,235.5 1168.9,238.4 C1170.1,241.3 1171.3,243.8 1172.4,245.3 C1173.5,246.8 1174.1,245.1 1175.4,247.6 C1176.8,250.1 1178.9,255.9 1180.5,260.4 C1182.1,264.8 1183.6,271.0 1185.1,274.3 C1186.6,277.6 1188.2,276.7 1189.7,280.0 C1191.2,283.3 1192.7,288.9 1194.4,293.9 C1196.1,298.9 1198.6,306.4 1200.1,310.1 C1201.6,313.8 1202.0,312.6 1203.6,315.9 C1205.1,319.2 1208.3,327.2 1209.4,329.8 C1210.4,332.4 1209.5,329.4 1210.4,331.6 C1211.3,333.8 1213.6,340.7 1215.0,343.1 C1216.4,345.5 1217.7,343.6 1219.0,345.9 C1220.3,348.2 1221.4,352.4 1223.1,357.0 C1224.8,361.6 1227.2,369.3 1228.9,373.2 C1230.7,377.1 1232.0,377.5 1233.6,380.6 C1235.1,383.7 1236.7,388.8 1238.2,391.8 C1239.7,394.8 1240.7,397.0 1242.8,398.7 C1244.9,400.4 1248.4,400.1 1250.9,402.2 C1253.4,404.3 1255.8,409.5 1257.9,411.4 C1260.0,413.3 1261.2,411.9 1263.7,413.8 C1266.2,415.7 1270.2,420.6 1272.9,422.5 C1275.6,424.4 1277.6,423.3 1279.9,425.3 C1282.2,427.3 1284.7,432.5 1286.8,434.6 C1288.9,436.7 1290.3,435.7 1292.6,438.1 C1294.9,440.5 1297.8,446.4 1300.7,449.2 C1303.6,452.0 1307.1,452.8 1310.0,454.7 C1312.9,456.6 1316.0,459.5 1318.1,460.5 C1320.2,461.5 1321.2,460.9 1322.7,460.5 C1324.2,460.1 1325.8,459.6 1327.3,458.2 C1328.8,456.8 1330.6,453.4 1331.9,451.9 C1333.2,450.4 1334.1,451.2 1335.4,449.2 C1336.8,447.2 1338.5,442.4 1340.0,439.9 C1341.5,437.3 1343.0,435.0 1344.7,433.9 C1346.5,432.8 1349.0,435.2 1350.5,433.4 C1352.0,431.6 1352.6,426.4 1353.9,423.0 C1355.2,419.6 1357.0,415.4 1358.6,413.1 C1360.1,410.8 1361.7,409.9 1363.2,409.1 C1364.7,408.3 1366.2,407.9 1367.8,408.4 C1369.3,408.9 1370.8,410.4 1372.5,411.9 C1374.2,413.4 1376.5,415.0 1378.2,417.2 C1379.9,419.4 1381.2,422.4 1382.9,425.3 C1384.7,428.2 1387.0,432.9 1388.7,434.6 C1390.4,436.3 1392.0,434.4 1393.3,435.7 C1394.6,437.0 1394.3,441.0 1396.8,442.2 C1399.3,443.4 1405.2,443.9 1408.3,442.7 C1411.4,441.5 1413.2,436.6 1415.3,435.0 C1417.4,433.4 1418.8,433.6 1421.1,433.4 C1423.4,433.2 1427.3,432.9 1429.2,433.7 C1431.1,434.5 1431.4,437.1 1432.6,438.1 C1433.8,439.1 1434.8,438.4 1436.1,439.9 C1437.4,441.4 1439.0,444.1 1440.7,447.3 C1442.4,450.5 1444.8,456.2 1446.5,458.9 C1448.2,461.6 1449.5,460.1 1451.2,463.5 C1452.9,466.9 1454.8,475.2 1456.9,479.3 C1459.0,483.4 1462.0,484.7 1463.9,487.8 C1465.8,490.9 1466.7,493.9 1468.5,498.2 C1470.3,502.5 1472.8,510.4 1474.7,513.6 C1476.6,516.8 1478.2,514.5 1479.9,517.6 C1481.6,520.7 1482.8,527.0 1485.1,532.1 C1487.4,537.2 1492.3,545.8 1493.8,548.5"/>
<g fill="#fff" shape-rendering="crispEdges">
<rect x="6" y="822" width="1513" height="1"/>
<rect x="1518" y="118" width="1" height="705"/>
<rect x="1563" y="118" width="1" height="704"/>
<rect x="23" y="823" width="1" height="3"/>
<rect x="88" y="823" width="1" height="3"/>
<rect x="146" y="823" width="1" height="3"/>
<rect x="210" y="823" width="1" height="3"/>
<rect x="272" y="823" width="1" height="3"/>
<rect x="336" y="823" width="1" height="3"/>
<rect x="398" y="823" width="1" height="3"/>
<rect x="463" y="823" width="1" height="3"/>
<rect x="527" y="823" width="1" height="3"/>
<rect x="589" y="823" width="1" height="3"/>
<rect x="653" y="823" width="1" height="3"/>
<rect x="715" y="823" width="1" height="3"/>
<rect x="779" y="823" width="1" height="3"/>
<rect x="844" y="823" width="1" height="3"/>
<rect x="902" y="823" width="1" height="3"/>
<rect x="966" y="823" width="1" height="3"/>
<rect x="1028" y="823" width="1" height="3"/>
<rect x="1092" y="823" width="1" height="3"/>
<rect x="1154" y="823" width="1" height="3"/>
<rect x="1219" y="823" width="1" height="3"/>
<rect x="1283" y="823" width="1" height="3"/>
<rect x="1345" y="823" width="1" height="3"/>
<rect x="1409" y="823" width="1" height="3"/>
<rect x="1471" y="823" width="1" height="3"/>
<rect x="1519" y="125" width="3" height="1"/>
<rect x="1519" y="232" width="3" height="1"/>
<rect x="1519" y="338" width="3" height="1"/>
<rect x="1519" y="445" width="3" height="1"/>
<rect x="1519" y="551" width="3" height="1"/>
<rect x="1519" y="658" width="3" height="1"/>
<rect x="1519" y="764" width="3" height="1"/>
<rect x="1564" y="188" width="3" height="1"/>
<rect x="1564" y="313" width="3" height="1"/>
<rect x="1564" y="437" width="3" height="1"/>
<rect x="1564" y="562" width="3" height="1"/>
<rect x="1564" y="687" width="3" height="1"/>
<rect x="1564" y="811" width="3" height="1"/>
</g>
<g fill="#999" shape-rendering="crispEdges"><rect x="23" y="839" width="1" height="17"/><rect x="779" y="839" width="1" height="17"/></g>
<path d="M1518.5 175.3l8 3.2-8 3.2z" fill="#fff"/>
<text x="1527.90" y="183.80" font-size="14.3" font-family="'Liberation Sans',sans-serif" fill="#fff" textLength="31.60" lengthAdjust="spacingAndGlyphs" >5.000</text>
<path d="M1518.5 282.3l8 3.2-8 3.2z" fill="#fff"/>
<text x="1527.90" y="290.80" font-size="14.3" font-family="'Liberation Sans',sans-serif" fill="#fff" textLength="31.60" lengthAdjust="spacingAndGlyphs" >4.500</text>
<path d="M1518.5 388.3l8 3.2-8 3.2z" fill="#fff"/>
<text x="1527.90" y="396.80" font-size="14.3" font-family="'Liberation Sans',sans-serif" fill="#fff" textLength="31.60" lengthAdjust="spacingAndGlyphs" >4.000</text>
<path d="M1518.5 495.3l8 3.2-8 3.2z" fill="#fff"/>
<text x="1527.90" y="503.80" font-size="14.3" font-family="'Liberation Sans',sans-serif" fill="#fff" textLength="31.60" lengthAdjust="spacingAndGlyphs" >3.500</text>
<path d="M1518.5 601.0999999999999l8 3.2-8 3.2z" fill="#fff"/>
<text x="1527.90" y="609.60" font-size="14.3" font-family="'Liberation Sans',sans-serif" fill="#fff" textLength="31.60" lengthAdjust="spacingAndGlyphs" >3.000</text>
<path d="M1518.5 708.3l8 3.2-8 3.2z" fill="#fff"/>
<text x="1527.90" y="716.80" font-size="14.3" font-family="'Liberation Sans',sans-serif" fill="#fff" textLength="31.60" lengthAdjust="spacingAndGlyphs" >2.500</text>
<path d="M1518.5 814.3l8 3.2-8 3.2z" fill="#fff"/>
<text x="1527.90" y="818.80" font-size="14.3" font-family="'Liberation Sans',sans-serif" fill="#fff" textLength="31.60" lengthAdjust="spacingAndGlyphs" >2.000</text>
<path d="M1563.5 122.2l8 3.2-8 3.2z" fill="#fff"/>
<text x="1573.00" y="131.50" font-size="14.3" font-family="'Liberation Sans',sans-serif" fill="#fff" textLength="20.70" lengthAdjust="spacingAndGlyphs" >450</text>
<path d="M1563.5 247.4l8 3.2-8 3.2z" fill="#fff"/>
<text x="1573.00" y="255.90" font-size="14.3" font-family="'Liberation Sans',sans-serif" fill="#fff" textLength="20.70" lengthAdjust="spacingAndGlyphs" >400</text>
<path d="M1563.5 372.2l8 3.2-8 3.2z" fill="#fff"/>
<text x="1573.00" y="380.70" font-size="14.3" font-family="'Liberation Sans',sans-serif" fill="#fff" textLength="20.70" lengthAdjust="spacingAndGlyphs" >350</text>
<path d="M1563.5 497.2l8 3.2-8 3.2z" fill="#fff"/>
<text x="1573.00" y="505.70" font-size="14.3" font-family="'Liberation Sans',sans-serif" fill="#fff" textLength="20.70" lengthAdjust="spacingAndGlyphs" >300</text>
<path d="M1563.5 621.3l8 3.2-8 3.2z" fill="#fff"/>
<text x="1573.00" y="629.80" font-size="14.3" font-family="'Liberation Sans',sans-serif" fill="#fff" textLength="20.70" lengthAdjust="spacingAndGlyphs" >250</text>
<path d="M1563.5 746.0l8 3.2-8 3.2z" fill="#fff"/>
<text x="1573.00" y="754.50" font-size="14.3" font-family="'Liberation Sans',sans-serif" fill="#fff" textLength="20.70" lengthAdjust="spacingAndGlyphs" >200</text>
<path d="M1520.5 549.7l5-8.7H1563v17.2h-37.5z" fill="#fff"/>
<text x="1527.40" y="554.80" font-size="14.3" font-family="'Liberation Sans',sans-serif" fill="#0a1a3a" textLength="31.20" lengthAdjust="spacingAndGlyphs" >3.262</text>
<path d="M1565 402.4l5.5-8.6H1620v17.2h-49.5z" fill="#e0c010"/>
<text x="1572.30" y="407.90" font-size="14.4" font-family="'Liberation Sans',sans-serif" fill="#141400" textLength="45.52" lengthAdjust="spacingAndGlyphs" >339.017</text>
<text x="167.50" y="837.20" font-size="14.3" font-family="'Liberation Sans',sans-serif" fill="#fff" textLength="20.02" lengthAdjust="spacingAndGlyphs" >Mar</text>
<text x="357.25" y="837.20" font-size="14.3" font-family="'Liberation Sans',sans-serif" fill="#fff" textLength="20.51" lengthAdjust="spacingAndGlyphs" >Jun</text>
<text x="547.00" y="837.20" font-size="14.3" font-family="'Liberation Sans',sans-serif" fill="#fff" textLength="21.02" lengthAdjust="spacingAndGlyphs" >Sep</text>
<text x="736.20" y="837.20" font-size="14.3" font-family="'Liberation Sans',sans-serif" fill="#fff" textLength="21.61" lengthAdjust="spacingAndGlyphs" >Dec</text>
<text x="924.00" y="837.20" font-size="14.3" font-family="'Liberation Sans',sans-serif" fill="#fff" textLength="20.02" lengthAdjust="spacingAndGlyphs" >Mar</text>
<text x="1112.75" y="837.20" font-size="14.3" font-family="'Liberation Sans',sans-serif" fill="#fff" textLength="20.51" lengthAdjust="spacingAndGlyphs" >Jun</text>
<text x="1303.00" y="837.20" font-size="14.3" font-family="'Liberation Sans',sans-serif" fill="#fff" textLength="21.02" lengthAdjust="spacingAndGlyphs" >Sep</text>
<text x="1487.60" y="837.20" font-size="14.3" font-family="'Liberation Sans',sans-serif" fill="#fff" textLength="21.61" lengthAdjust="spacingAndGlyphs" >Dec</text>
<text x="387.00" y="853.00" font-size="14.3" font-family="'Liberation Sans',sans-serif" fill="#fff" textLength="28.02" lengthAdjust="spacingAndGlyphs" >2021</text>
<text x="1135.00" y="853.00" font-size="14.3" font-family="'Liberation Sans',sans-serif" fill="#fff" textLength="28.02" lengthAdjust="spacingAndGlyphs" >2022</text>
<rect x="0" y="863" width="1623" height="1" fill="#1c1c1c"/>
<rect x="18" y="131" width="12" height="12" fill="#fff"/><rect x="18" y="147" width="12" height="12" fill="#e0c020"/>
<text x="34.20" y="143.00" font-size="13.8" font-family="'Liberation Sans',sans-serif" fill="#fff" textLength="449.81" lengthAdjust="spacingAndGlyphs" >Daily National Average Gasoline Prices Regular Unleaded - Mid Price (R1)</text>
<text x="34.20" y="159.00" font-size="13.8" font-family="'Liberation Sans',sans-serif" fill="#fff" textLength="343.79" lengthAdjust="spacingAndGlyphs" >US CPI Urban Consumers Gasoline NSA - Last Price (R2)</text>
<text x="505.00" y="143.00" font-size="13.8" font-family="'Liberation Sans',sans-serif" fill="#fff" textLength="31.50" lengthAdjust="spacingAndGlyphs" >3.262</text>
<text x="491.00" y="159.00" font-size="13.8" font-family="'Liberation Sans',sans-serif" fill="#fff" textLength="45.49" lengthAdjust="spacingAndGlyphs" >339.017</text>
<g id="tools">
<text x="698.80" y="133.20" font-size="13.2" font-family="'Liberation Sans',sans-serif" fill="#d6d6d6" textLength="31.98" lengthAdjust="spacingAndGlyphs" >Track</text>
<text x="763.00" y="133.20" font-size="13.2" font-family="'Liberation Sans',sans-serif" fill="#d6d6d6" textLength="49.98" lengthAdjust="spacingAndGlyphs" >Annotate</text>
<text x="845.40" y="133.20" font-size="13.2" font-family="'Liberation Sans',sans-serif" fill="#d6d6d6" textLength="29.38" lengthAdjust="spacingAndGlyphs" >News</text>
<text x="907.30" y="133.20" font-size="13.2" font-family="'Liberation Sans',sans-serif" fill="#d6d6d6" textLength="31.32" lengthAdjust="spacingAndGlyphs" >Zoom</text>
<text x="907.00" y="155.40" font-size="13.2" font-family="'Liberation Sans',sans-serif" fill="#d6d6d6" textLength="32.01" lengthAdjust="spacingAndGlyphs" >Reset</text>
<g stroke="#777" fill="none" stroke-width="1"><path d="M684.5 125.3l3.3 3.3-3.3 3.3-3.3-3.3z"/><path d="M684.5 123v11.2M678.9 128.6h11.2"/></g>
<path d="M745.5 132.5l6-6 1.5 1.5-6 6z" fill="#777"/><path d="M749 133.5h5" stroke="#777"/>
<g fill="#808080"><rect x="826.9" y="124" width="3.9" height="2.9"/><rect x="831.9" y="124" width="4.2" height="1"/><rect x="831.9" y="125.9" width="4.2" height="1"/><rect x="826.9" y="127.9" width="9.2" height="1"/><rect x="826.9" y="130" width="9.2" height="1"/><rect x="826.9" y="132" width="9.2" height="1"/></g>
<circle cx="891.5" cy="127.1" r="3.1" fill="none" stroke="#8a8a8a" stroke-width="1.2"/><path d="M894.6 130.2l4 3.2" stroke="#808080" stroke-width="1.8"/>
<circle cx="894" cy="151.1" r="3.7" fill="none" stroke="#fff" stroke-width="3"/>
</g>
</svg>
</body></html>
